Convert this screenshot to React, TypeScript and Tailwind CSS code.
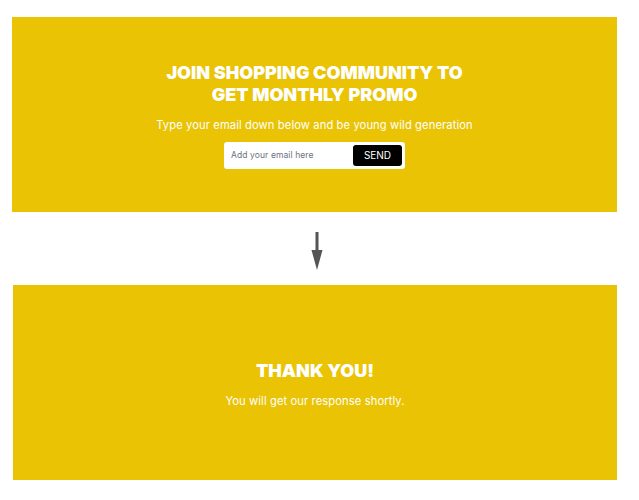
export default function App() {
  return (
    <div className="min-h-[500px] w-[639px] bg-white pt-[17px] font-['Inter',sans-serif] text-white">
      {/* signup panel */}
      <section className="ml-[12px] flex h-[195px] w-[605px] flex-col items-center bg-[#e9c304] pt-[45px]">
        <h2 className="text-center text-[18px] font-black uppercase leading-[22px]">
          Join shopping community to
          <br />
          get monthly promo
        </h2>
        <p className="mt-[11px] text-[11.2px] leading-[16px] tracking-[0.1px]">
          Type your email down below and be young wild generation
        </p>
        <form
          className="mt-[9px] flex h-[27px] w-[181px] items-center justify-between rounded-[3px] bg-white pl-[7px] pr-[3px]"
          onSubmit={(e) => e.preventDefault()}
        >
          <input
            type="email"
            placeholder="Add your email here"
            className="w-[110px] bg-transparent text-[8.5px] tracking-[0.1px] text-gray-700 placeholder:text-gray-500 outline-none"
          />
          <button
            type="submit"
            className="h-[21px] w-[49px] rounded-[3px] bg-black text-[10px] text-white"
          >
            SEND
          </button>
        </form>
      </section>

      {/* arrow */}
      <div className="flex h-[73px] justify-center pt-[20px]">
        <svg width="14" height="38" viewBox="0 0 14 38" className="ml-[-6px]">
          <rect x="5.5" y="0" width="3" height="19" fill="#555" />
          <path d="M1.5 18 L12.5 18 L7 38 Z" fill="#555" />
        </svg>
      </div>

      {/* thank you panel */}
      <section className="ml-[13px] flex h-[195px] w-[604px] flex-col items-center justify-center bg-[#e9c304] pt-[4px]">
        <h2 className="text-[18px] font-black uppercase leading-[22px]">Thank you!</h2>
        <p className="mt-[11px] text-[11.2px] leading-[16px] tracking-[0.1px]">You will get our response shortly.</p>
      </section>
    </div>
  );
}
